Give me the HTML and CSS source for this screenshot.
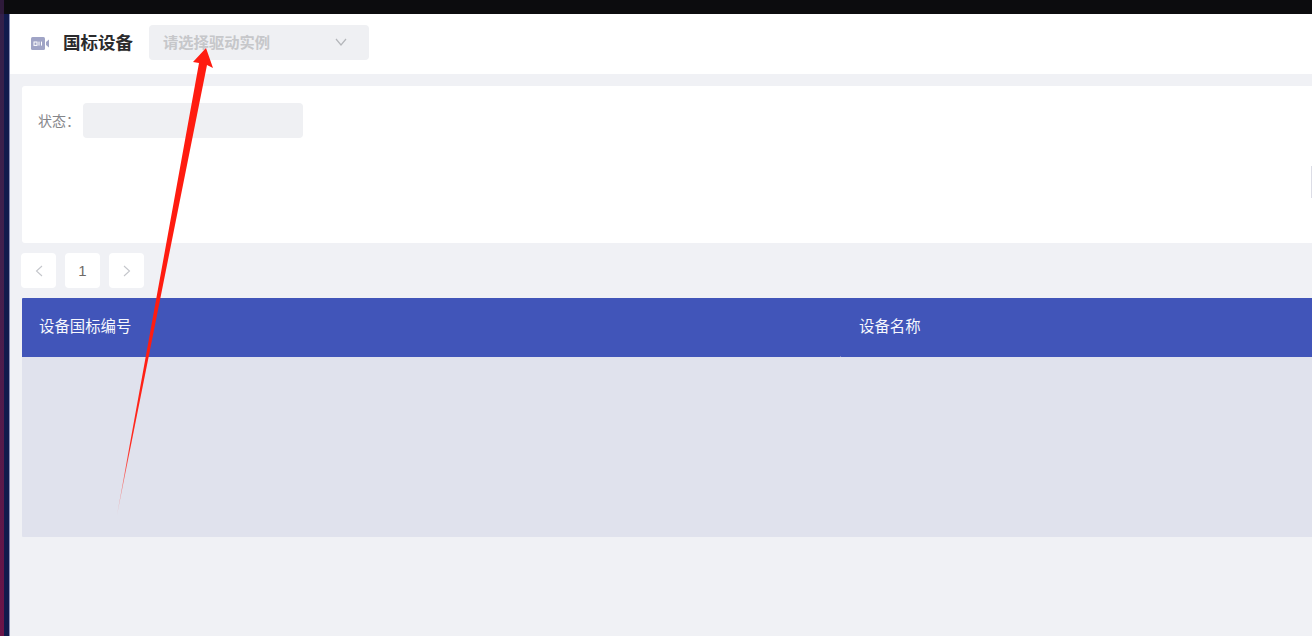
FILE: index.html
```html
<!DOCTYPE html>
<html lang="zh-CN">
<head>
<meta charset="utf-8">
<title>国标设备</title>
<link rel="stylesheet" href="styles.css">
</head>
<body>
<div class="topline"></div>
<div class="shell">
  <div class="rail"></div>
  <main class="main">
    <header class="header">
      <svg class="cam" viewBox="0 0 18 13" width="18" height="13" aria-hidden="true">
        <rect x="0" y="0" width="14" height="13" rx="1.5" fill="#a0a4c6"/>
        <rect x="3" y="5" width="3" height="3.4" fill="none" stroke="#fff" stroke-width="1"/>
        <path d="M8 4.6v4M10.500 4.600v4" fill="none" stroke="#fff" stroke-width="1"/>
        <path d="M15 5l3-2.500v8L15 8z" fill="#a0a4c6"/>
      </svg>
      <h1 class="title">国标设备</h1>
      <div class="select">
        <span class="placeholder">请选择驱动实例</span>
        <svg class="chev" viewBox="0 0 12 8" width="12" height="8" aria-hidden="true"><path d="M1 1l5 6 5-6" fill="none" stroke="#b4b6ba" stroke-width="1.2"/></svg>
      </div>
    </header>
    <section class="content">
      <div class="filter">
        <label class="label">状态&#xFF1A;</label>
        <div class="input"></div>
        <div class="edge"></div>
      </div>
      <nav class="pager">
        <button class="page"><svg viewBox="0 0 8 12" width="8" height="12"><path d="M7 1L1.500 6 7 11" fill="none" stroke="#c4c6cb" stroke-width="1.1"/></svg></button>
        <button class="page num">1</button>
        <button class="page"><svg viewBox="0 0 8 12" width="8" height="12"><path d="M1 1l5.500 5L1 11" fill="none" stroke="#c4c6cb" stroke-width="1.1"/></svg></button>
      </nav>
      <div class="table">
        <div class="thead">
          <div class="th first">设备国标编号</div>
          <div class="th">设备名称</div>
        </div>
        <div class="tbody"></div>
      </div>
    </section>
  </main>
</div>
<svg class="arrow" viewBox="0 0 1312 636" width="1312" height="636" aria-hidden="true">
  <defs>
    <linearGradient id="fade" gradientUnits="userSpaceOnUse" x1="150" y1="340" x2="117" y2="515">
      <stop offset="0" stop-color="#ff1c10"/>
      <stop offset="0.6" stop-color="#ff2a20"/>
      <stop offset="1" stop-color="#ff2a20" stop-opacity="0.3"/>
    </linearGradient>
  </defs>
  <polygon points="206,48 213,68 207,65 117,515 199,63 193,62" fill="url(#fade)"/>
</svg>
</body>
</html>
```
FILE: styles.css
```css
* { box-sizing: border-box; }
html, body { margin: 0; padding: 0; }
body {
  width: 1312px;
  height: 636px;
  overflow: hidden;
  position: relative;
  display: flex;
  flex-direction: column;
  background: #f0f1f5;
  font-family: "Noto Sans CJK SC", "Noto Sans", sans-serif;
}
.topline {
  height: 14px;
  flex: none;
  background: linear-gradient(to right, #2e1a3a 0, #2e1a3a 4px, #0c0c0e 4px);
}
.shell { flex: 1; display: flex; min-height: 0; }
.rail {
  width: 10px;
  flex: none;
  background:
    linear-gradient(to right, transparent 9px, #8d92b8 9px),
    linear-gradient(to right, transparent 4px, #111a4c 4px),
    linear-gradient(to bottom, #33204a 0, #42204e 40%, #6c1448 100%);
}
.main { flex: 1; min-width: 0; display: flex; flex-direction: column; }
.header {
  height: 60px;
  flex: none;
  background: #fff;
  display: flex;
  align-items: center;
  padding: 0 0 3px 21px;
}
.cam { flex: none; margin-top: 2px; }
.title {
  margin: 0 16px 2px 14px;
  font-size: 17.5px;
  font-weight: 700;
  color: #2b2b2d;
  white-space: nowrap;
  line-height: 1;
}
.select {
  width: 220px;
  height: 35px;
  background: #eff0f3;
  border-radius: 4px;
  display: flex;
  align-items: center;
  justify-content: space-between;
  padding: 0 22px 2px 14px;
}
.placeholder { font-size: 15.3px; font-weight: 700; color: #c6c7ca; line-height: 1; }
.content { flex: 1; min-height: 0; padding: 12px 0 0 12px; }
.filter {
  position: relative;
  height: 157px;
  background: #fff;
  border-radius: 3px 0 0 3px;
  display: flex;
  align-items: flex-start;
  padding: 17px 0 0 16px;
}
.label {
  font-family: "Noto Sans CJK TC", sans-serif;
  font-size: 14px;
  color: #85868a;
  line-height: 35px;
  width: 45px;
  white-space: nowrap;
}
.input { width: 220px; height: 35px; background: #eff0f3; border-radius: 4px; }
.edge {
  position: absolute;
  right: 0;
  top: 80px;
  width: 1px;
  height: 32px;
  background: #dcdde6;
}
.pager { display: flex; gap: 9px; margin: 10px 0 10px -1px; }
.page {
  width: 35px;
  height: 35px;
  padding: 0;
  border: 0;
  border-radius: 4px;
  background: #fff;
  display: flex;
  align-items: center;
  justify-content: center;
  font: 15px "Liberation Sans", sans-serif;
  color: #6f6a66;
}
.table { border-radius: 1px 0 0 1px; overflow: hidden; }
.thead { height: 59px; background: #4155b9; display: grid; grid-template-columns: 820px 1fr; }
.th {
  display: flex;
  align-items: center;
  padding: 0 0 3px 17px;
  font-size: 15.4px;
  font-weight: 400;
  color: #f6f7fd;
  line-height: 1;
}
.first { position: relative; }
.first::after {
  content: "";
  position: absolute;
  right: 1px;
  bottom: 0;
  width: 1px;
  height: 1px;
  background: #7e89c8;
}
.tbody { height: 180px; background: #e0e2ed; }
.arrow { position: absolute; left: 0; top: 0; pointer-events: none; }
```
